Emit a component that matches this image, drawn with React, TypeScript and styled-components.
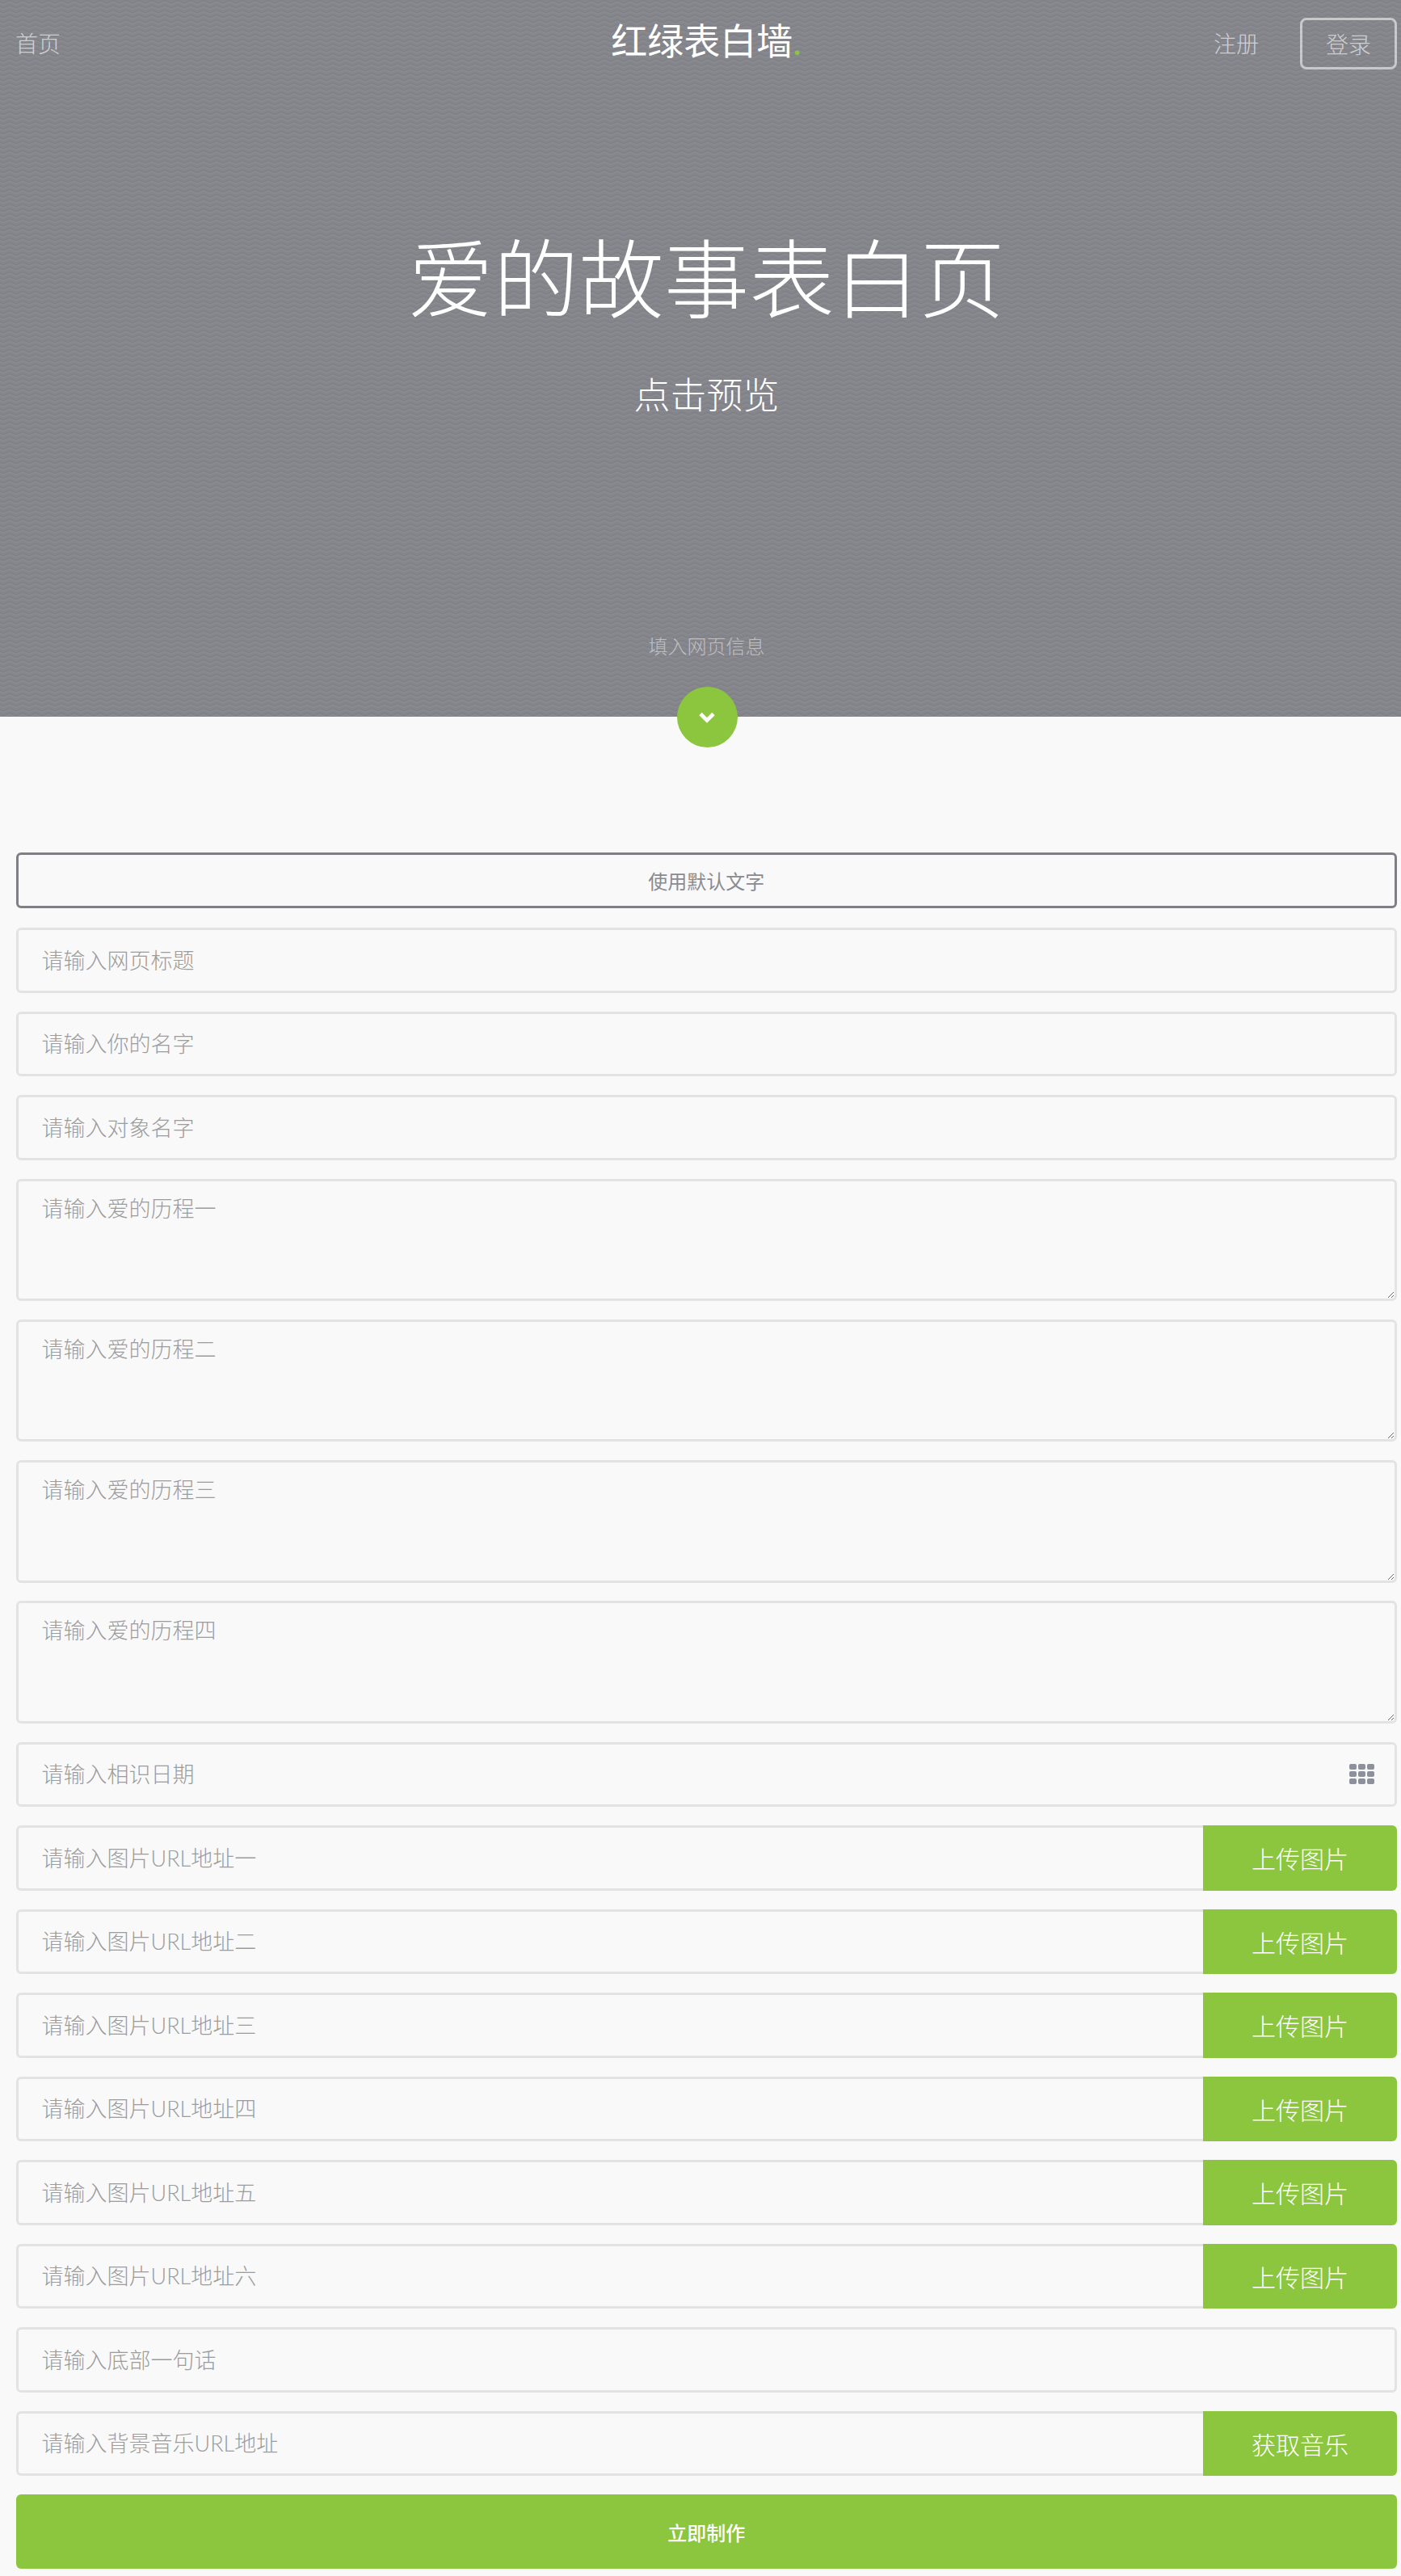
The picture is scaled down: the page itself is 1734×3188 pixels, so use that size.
import React from "react";
import styled, { createGlobalStyle } from "styled-components";

const wave = encodeURIComponent(
  `<svg xmlns="http://www.w3.org/2000/svg" width="16" height="6"><path d="M-8 2 Q-4 -1 0 2 T8 2 T16 2 T24 2" fill="none" stroke="#7f8086" stroke-width="1.3"/><path d="M-8 4 Q-4 1 0 4 T8 4 T16 4 T24 4" fill="none" stroke="#8b8c92" stroke-width=".9"/></svg>`
);

const Global = createGlobalStyle`
  html, body { margin: 0; padding: 0; overflow-x: hidden; background: #f9f9f9; }
  * { box-sizing: border-box; }
  body {
    font-family: Lato, "Noto Sans CJK SC", sans-serif;
    font-weight: 300;
  }
`;

const Page = styled.div`
  width: 1749px;
`;

const Hero = styled.header`
  position: relative;
  height: 887px;
  background-color: #85868c;
  background-image: url("data:image/svg+xml,${wave}");
  display: flex;
  flex-direction: column;
  align-items: center;
`;

const Nav = styled.nav`
  width: 100%;
  height: 110px;
  padding: 22px 20px 0 19px;
  display: grid;
  grid-template-columns: 1fr auto 1fr;
  align-items: start;
`;

const NavLink = styled.a`
  font-size: 28px;
  line-height: 64px;
  color: rgba(255, 255, 255, 0.62);
`;

const Logo = styled.div`
  font-size: 45px;
  line-height: 54px;
  margin-top: 2px;
  font-weight: 400;
  color: #fff;
`;

const LogoDot = styled.span`
  color: #8cc63f;
`;

const NavRight = styled.div`
  display: flex;
  justify-content: flex-end;
  align-items: center;
  gap: 51px;
`;

const LoginButton = styled.a`
  width: 120px;
  height: 64px;
  border: 3px solid rgba(255, 255, 255, 0.55);
  border-radius: 8px;
  font-size: 28px;
  line-height: 60px;
  text-align: center;
  color: rgba(255, 255, 255, 0.62);
`;

const Title = styled.h1`
  margin: 169px 0 0;
  font-size: 105.5px;
  line-height: 130px;
  font-weight: 300;
  color: #fff;
`;

const PreviewLink = styled.a`
  margin-top: 50px;
  font-size: 45px;
  line-height: 60px;
  color: #fff;
`;

const ScrollHint = styled.div`
  margin-top: auto;
  margin-bottom: 70px;
  font-size: 24px;
  line-height: 34px;
  color: rgba(255, 255, 255, 0.48);
`;

const ScrollButton = styled.div`
  position: absolute;
  left: 50%;
  bottom: -38px;
  width: 75px;
  height: 75px;
  margin-left: -37px;
  border-radius: 50%;
  background: #8cc63f;
  display: flex;
  align-items: center;
  justify-content: center;
`;

const Form = styled.form`
  padding: 168px 20px 9px 19.5px;
  display: flex;
  flex-direction: column;
`;

const DefaultButton = styled.button`
  height: 69px;
  margin-bottom: 24px;
  border: 3px solid #7f8086;
  border-radius: 6px;
  background: transparent;
  font: inherit;
  font-weight: 400;
  font-size: 24px;
  color: #8a8b91;
`;

const Field = styled.div`
  position: relative;
  display: flex;
  height: 80.5px;
  margin-bottom: 23px;
`;

const TextField = styled.input<{ $joined?: boolean }>`
  flex: 1;
  min-width: 0;
  height: 100%;
  padding: 0 29px;
  border: 3px solid #e3e3e3;
  border-radius: ${(p) => (p.$joined ? "6px 0 0 6px" : "6px")};
  border-right-width: ${(p) => (p.$joined ? 0 : "3px")};
  background: #f9f9f9;
  font: inherit;
  font-size: 27px;
  outline: none;
  &::placeholder { color: #9c9c9c; opacity: 1; }
`;

const TextArea = styled.textarea`
  display: block;
  width: 100%;
  height: 151.5px;
  margin-bottom: 22.75px;
  padding: 15px 29px;
  border: 3px solid #e3e3e3;
  border-radius: 6px;
  background: #f9f9f9;
  font: inherit;
  font-size: 27px;
  line-height: 38px;
  resize: vertical;
  outline: none;
  &::placeholder { color: #9c9c9c; opacity: 1; }
`;

const SideButton = styled.button`
  width: 240px;
  height: 100%;
  border: 0;
  border-radius: 0 6px 6px 0;
  background: #8cc63f;
  color: #fff;
  font: inherit;
  font-size: 30px;
`;

const CalendarIcon = styled.svg`
  position: absolute;
  right: 28px;
  top: 27px;
  width: 31px;
  height: 25px;
`;

const SubmitButton = styled.button`
  height: 92px;
  border: 0;
  border-radius: 6px;
  background: #8cc63f;
  color: #fff;
  font: inherit;
  font-weight: 500;
  font-size: 24px;
`;

const cells = [0, 1, 2].flatMap((r) => [0, 1, 2].map((c) => ({ r, c })));
const ordinals = ["一", "二", "三", "四", "五", "六"];

export default function App() {
  return (
    <Page>
      <Global />
      <Hero>
        <Nav>
          <NavLink>首页</NavLink>
          <Logo>
            红绿表白墙<LogoDot>.</LogoDot>
          </Logo>
          <NavRight>
            <NavLink>注册</NavLink>
            <LoginButton>登录</LoginButton>
          </NavRight>
        </Nav>
        <Title>爱的故事表白页</Title>
        <PreviewLink>点击预览</PreviewLink>
        <ScrollHint>填入网页信息</ScrollHint>
        <ScrollButton>
          <svg width="22" height="16" viewBox="0 0 22 16" fill="none">
            <path d="M3 3.5 L11 11.5 L19 3.5" stroke="#fff" strokeWidth="4.6" />
          </svg>
        </ScrollButton>
      </Hero>
      <Form>
        <DefaultButton type="button">使用默认文字</DefaultButton>
        {["请输入网页标题", "请输入你的名字", "请输入对象名字"].map((t) => (
          <Field key={t}>
            <TextField placeholder={t} />
          </Field>
        ))}
        {["一", "二", "三", "四"].map((n) => (
          <TextArea key={n} placeholder={`请输入爱的历程${n}`} />
        ))}
        <Field>
          <TextField placeholder="请输入相识日期" />
          <CalendarIcon viewBox="0 0 31 25">
            {cells.map(({ r, c }) => (
              <rect key={`${r}${c}`} x={c * 11} y={r * 9} width="9" height="7" rx="2" fill="#8c919c" />
            ))}
          </CalendarIcon>
        </Field>
        {ordinals.map((n) => (
          <Field key={n}>
            <TextField $joined placeholder={`请输入图片URL地址${n}`} />
            <SideButton type="button">上传图片</SideButton>
          </Field>
        ))}
        <Field>
          <TextField placeholder="请输入底部一句话" />
        </Field>
        <Field>
          <TextField $joined placeholder="请输入背景音乐URL地址" />
          <SideButton type="button">获取音乐</SideButton>
        </Field>
        <SubmitButton type="button">立即制作</SubmitButton>
      </Form>
    </Page>
  );
}
